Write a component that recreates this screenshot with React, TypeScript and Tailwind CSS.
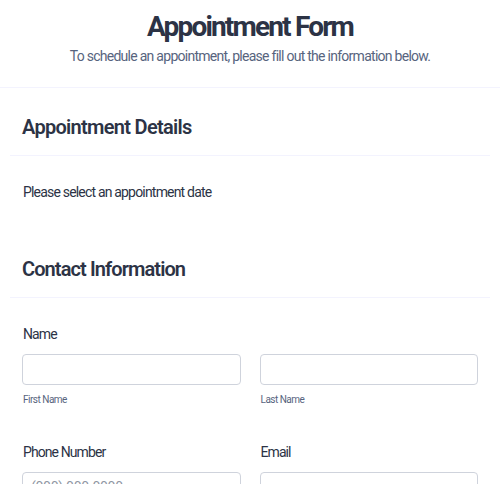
import React from "react";

function Field({ label, sub, placeholder }: { label: string; sub?: string; placeholder?: string }) {
  return (
    <div className="flex flex-col">
      <label className="text-[14px] leading-[20px] text-[#2c3345] tracking-[-0.065em] pl-[1px]">{label}</label>
      <div className="mt-[10px] h-[31px] rounded-[4px] border border-[#cfd3dc] bg-white px-[8px] flex items-center">
        {placeholder ? (
          <span className="text-[14px] text-[#8f96a3] tracking-[-0.02em]">{placeholder}</span>
        ) : null}
      </div>
      {sub ? (
        <span className="mt-[8px] text-[10px] leading-[14px] text-[#57647e] tracking-[-0.05em] pl-[1px]">{sub}</span>
      ) : null}
    </div>
  );
}

export default function App() {
  return (
    <div className="w-[500px] h-[484px] overflow-hidden bg-white font-['Roboto','Liberation_Sans',sans-serif]">
      <header className="border-b border-[#f3f3fe] pt-[10px] pb-[21px] text-center">
        <h1 className="text-[28px] leading-[34px] font-bold text-[#2c3345] tracking-[-0.065em]">Appointment Form</h1>
        <p className="mt-[2px] text-[14px] leading-[20px] text-[#57647e] tracking-[-0.052em]">
          To schedule an appointment, please fill out the information below.
        </p>
      </header>

      <section className="mx-[10px]">
        <div className="border-b border-[#f3f3fe] px-[12px] pt-[25px] pb-[14px]">
          <h2 className="text-[20px] leading-[28px] font-semibold text-[#2c3345] tracking-[-0.035em]">Appointment Details</h2>
        </div>
        <div className="px-[13px] pt-[26px] pb-[28px]">
          <p className="text-[14px] leading-[20px] text-[#2c3345] tracking-[-0.058em]">Please select an appointment date</p>
        </div>
      </section>

      <section className="mx-[10px]">
        <div className="border-b border-[#f3f3fe] px-[12px] pt-[25px] pb-[14px]">
          <h2 className="text-[20px] leading-[28px] font-semibold text-[#2c3345] tracking-[-0.045em]">Contact Information</h2>
        </div>
        <div className="px-[12px] pt-[26px]">
          <label className="block text-[14px] leading-[20px] text-[#2c3345] tracking-[-0.065em] pl-[1px]">Name</label>
          <div className="mt-[10px] grid grid-cols-2 gap-x-[19px]">
            <div className="flex flex-col">
              <div className="h-[31px] rounded-[4px] border border-[#cfd3dc] bg-white" />
              <span className="mt-[8px] text-[10px] leading-[14px] text-[#57647e] tracking-[-0.05em] pl-[1px]">First Name</span>
            </div>
            <div className="flex flex-col">
              <div className="h-[31px] rounded-[4px] border border-[#cfd3dc] bg-white" />
              <span className="mt-[8px] text-[10px] leading-[14px] text-[#57647e] tracking-[-0.05em] pl-[1px]">Last Name</span>
            </div>
          </div>
          <div className="mt-[35px] grid grid-cols-2 gap-x-[19px]">
            <Field label="Phone Number" placeholder="(000) 000-0000" />
            <Field label="Email" />
          </div>
        </div>
      </section>
    </div>
  );
}
